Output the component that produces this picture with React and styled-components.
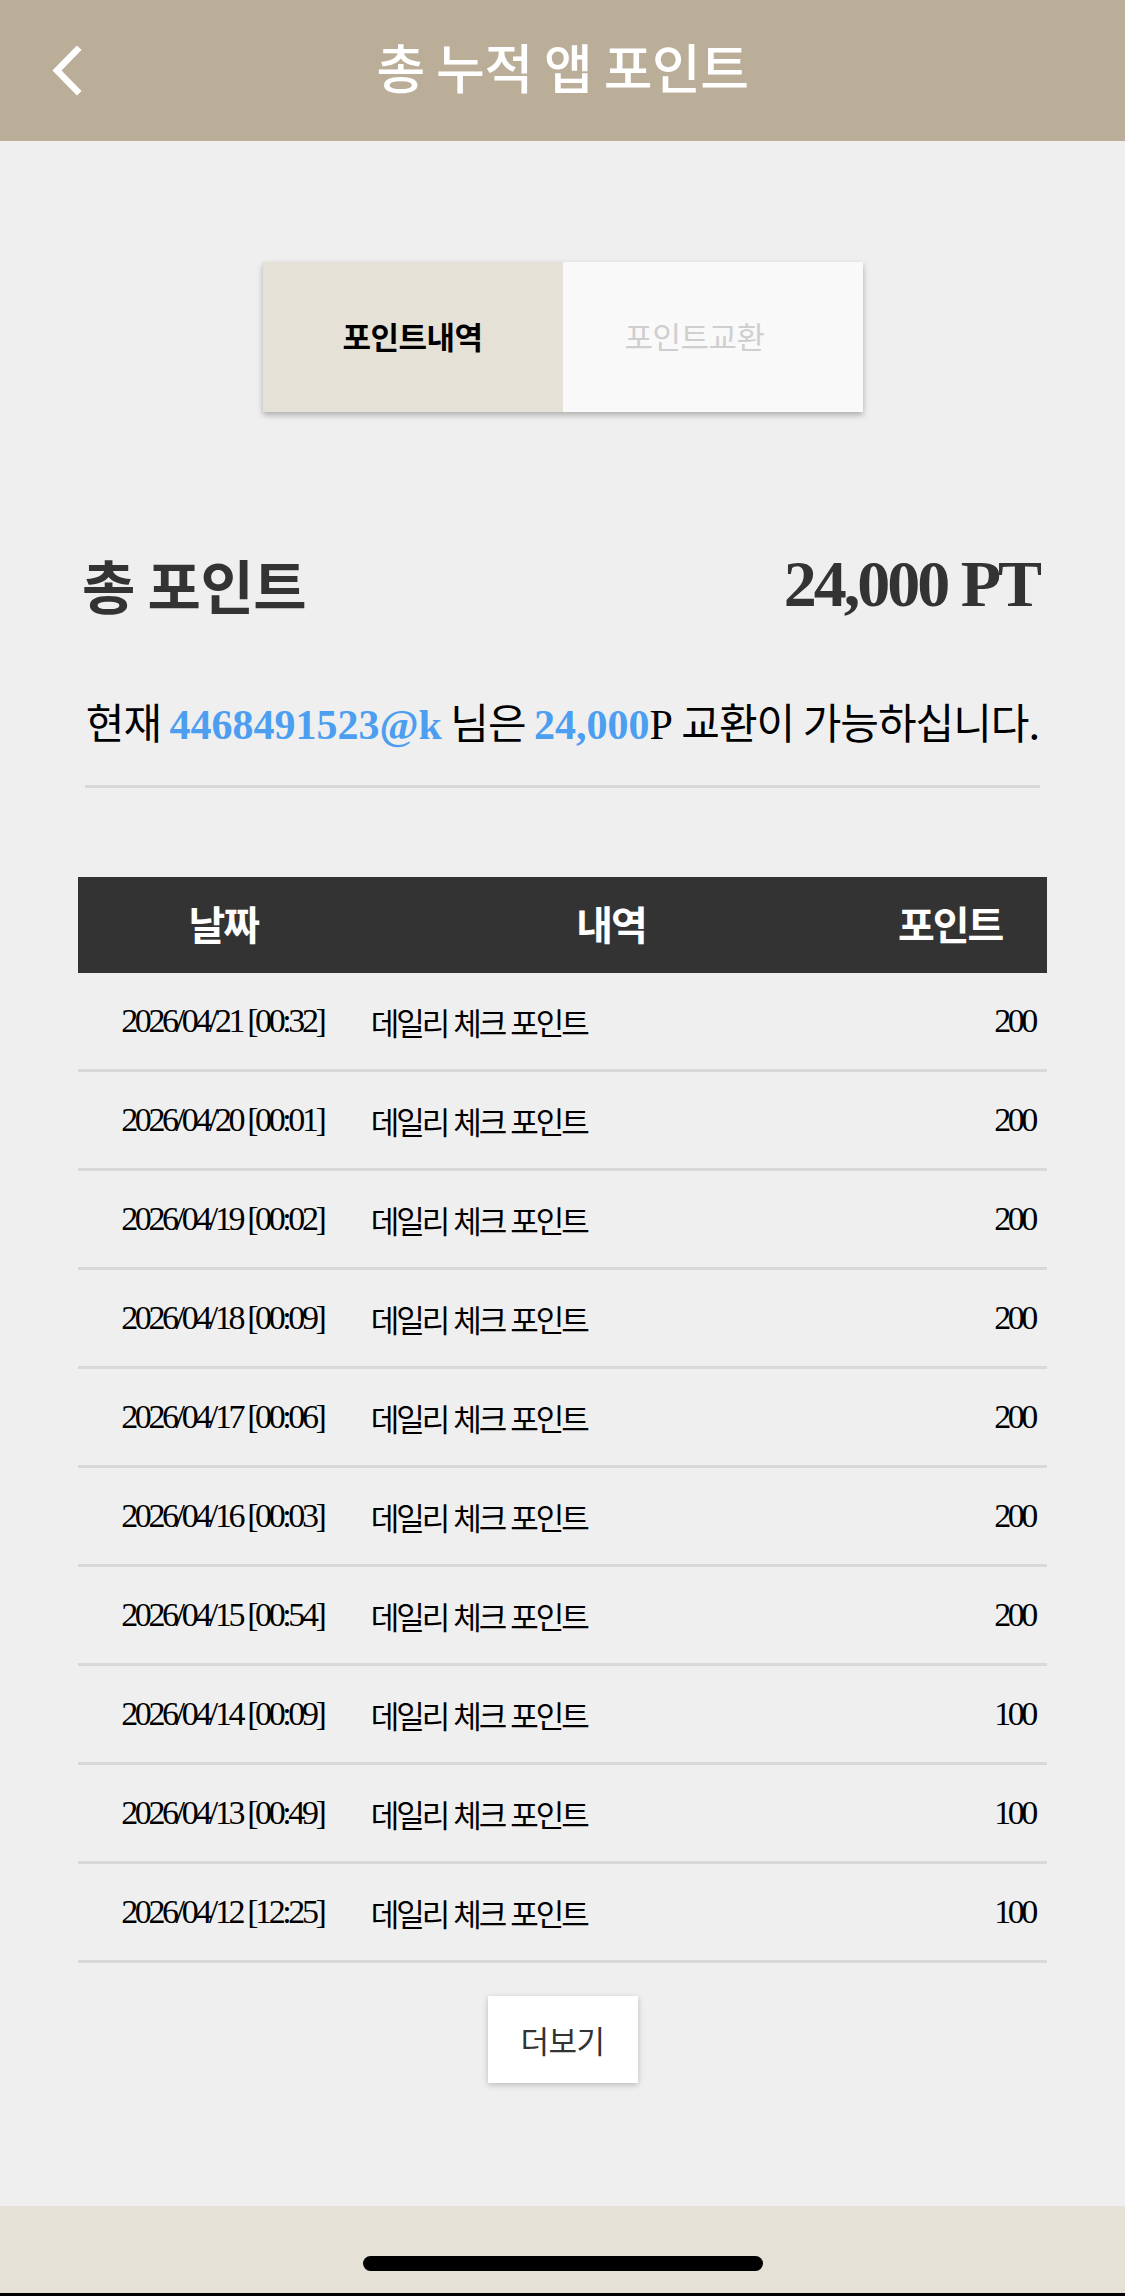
import React, { useState } from 'react'
import styled, { createGlobalStyle } from 'styled-components'

const KR = `"Noto Sans CJK KR", "Noto Sans", sans-serif`
const SERIF = `"Liberation Serif", "Noto Sans CJK KR", serif`

const GlobalStyle = createGlobalStyle`
  html, body {
    margin: 0;
    padding: 0;
    background: #efefef;
  }
  * {
    box-sizing: border-box;
  }
`

const Page = styled.div`
  min-height: 2296px;
  display: flex;
  flex-direction: column;
  font-family: ${KR};
  color: #000;
`

const Header = styled.header`
  height: 141px;
  background: #baae98;
  display: grid;
  grid-template-columns: 1fr auto 1fr;
  align-items: center;
`

const BackButton = styled.button`
  justify-self: start;
  margin-left: 50px;
  padding: 0;
  width: 40px;
  height: 50px;
  border: none;
  background: transparent;
  display: flex;
  align-items: center;
  cursor: pointer;
`

const Title = styled.h1`
  margin: 0;
  font-size: 53px;
  font-weight: 500;
  color: #fff;
  letter-spacing: -0.5px;
  line-height: 1;
  padding-bottom: 8px;
`

const Main = styled.main`
  flex: 1;
  padding: 121px 78px 0;
  display: flex;
  flex-direction: column;
`

const Tabs = styled.div`
  align-self: center;
  width: 600px;
  height: 150px;
  display: grid;
  grid-template-columns: 1fr 1fr;
  box-shadow: 0 3px 6px rgba(0, 0, 0, 0.28);
`

const Tab = styled.button`
  border: none;
  margin: 0;
  font-family: ${KR};
  font-size: 31px;
  letter-spacing: -0.5px;
  cursor: pointer;
  background: ${p => (p.$active ? '#e5e1d6' : '#f9f9f9')};
  color: ${p => (p.$active ? '#000' : '#cfcfcf')};
  font-weight: ${p => (p.$active ? 700 : 400)};
  padding: 0 ${p => (p.$active ? '0' : '36px')} 4px 0;
`

const TotalRow = styled.div`
  margin-top: 140px;
  padding: 0 8px 0 4px;
  display: flex;
  justify-content: space-between;
  align-items: center;
  color: #333;
  height: 64px;
`

const TotalLabel = styled.h2`
  margin: 0;
  font-size: 58px;
  font-weight: 700;
  letter-spacing: -0.5px;
`

const TotalValue = styled.div`
  font-family: ${SERIF};
  font-size: 66px;
  font-weight: 700;
  letter-spacing: -3px;
`

const Message = styled.p`
  margin: 79px 0 0;
  text-align: center;
  font-size: 42px;
  letter-spacing: -1px;
  line-height: 52px;
  color: #000;
`

const Blue = styled.b`
  font-family: ${SERIF};
  color: #4c9ef0;
  font-weight: 700;
  letter-spacing: 0;
`

const SerifText = styled.span`
  font-family: ${SERIF};
  letter-spacing: 0;
`

const Divider = styled.hr`
  margin: 34px 7px 0;
  border: none;
  height: 3px;
  background: #d9d9d9;
`

const Table = styled.div`
  margin-top: 89px;
  display: flex;
  flex-direction: column;
`

const Cols = styled.div`
  display: grid;
  grid-template-columns: 30% 50% 20%;
  align-items: center;
`

const HeadRow = styled(Cols)`
  height: 96px;
  background: #333;
  color: #fff;
`

const HeadCell = styled.div`
  text-align: center;
  font-size: 40px;
  font-weight: 700;
  letter-spacing: -2px;
  padding-bottom: 4px;
`

const Row = styled(Cols)`
  height: 99px;
  border-bottom: 3px solid #d9d9d9;
`

const DateCell = styled.div`
  text-align: center;
  font-family: ${SERIF};
  font-size: 34px;
  letter-spacing: -3.4px;
  padding-right: 2px;
`

const DescCell = styled.div`
  font-size: 31px;
  letter-spacing: -3px;
  word-spacing: 2px;
  padding-left: 2px;
`

const PointCell = styled.div`
  text-align: right;
  font-family: ${SERIF};
  font-size: 34px;
  letter-spacing: -3.4px;
  padding-right: 12px;
`

const MoreButton = styled.button`
  align-self: center;
  margin-top: 33px;
  width: 150px;
  height: 87px;
  border: none;
  background: #fff;
  box-shadow: 0 2px 6px rgba(0, 0, 0, 0.22);
  font-family: ${KR};
  font-size: 31px;
  letter-spacing: -0.5px;
  color: #333;
  cursor: pointer;
`

const Footer = styled.footer`
  height: 90px;
  background: #e5e1d6;
  display: flex;
  justify-content: center;
  border-bottom: 3px solid #000;
`

const HomeIndicator = styled.div`
  margin-top: 50px;
  width: 400px;
  height: 15px;
  border-radius: 8px;
  background: #000;
`

const history = [
  ['2026/04/21 [00:32]', 200],
  ['2026/04/20 [00:01]', 200],
  ['2026/04/19 [00:02]', 200],
  ['2026/04/18 [00:09]', 200],
  ['2026/04/17 [00:06]', 200],
  ['2026/04/16 [00:03]', 200],
  ['2026/04/15 [00:54]', 200],
  ['2026/04/14 [00:09]', 100],
  ['2026/04/13 [00:49]', 100],
  ['2026/04/12 [12:25]', 100],
]

export default function App() {
  const [tab, setTab] = useState('history')

  return (
    <Page>
      <GlobalStyle />
      <Header>
        <BackButton aria-label="back">
          <svg width="34" height="50" viewBox="0 0 34 50">
            <polyline points="27,4 7,24.5 27,45" fill="none" stroke="#fff" strokeWidth="6.5" strokeLinecap="square" />
          </svg>
        </BackButton>
        <Title>총 누적 앱 포인트</Title>
        <div />
      </Header>

      <Main>
        <Tabs>
          <Tab $active={tab === 'history'} onClick={() => setTab('history')}>포인트내역</Tab>
          <Tab $active={tab === 'exchange'} onClick={() => setTab('exchange')}>포인트교환</Tab>
        </Tabs>

        <TotalRow>
          <TotalLabel>총 포인트</TotalLabel>
          <TotalValue>24,000 PT</TotalValue>
        </TotalRow>

        <Message>
          현재 <Blue>4468491523@k</Blue> 님은 <Blue>24,000</Blue><SerifText>P</SerifText> 교환이 가능하십니다.
        </Message>
        <Divider />

        <Table>
          <HeadRow>
            <HeadCell>날짜</HeadCell>
            <HeadCell>내역</HeadCell>
            <HeadCell>포인트</HeadCell>
          </HeadRow>
          {history.map(([date, pt]) => (
            <Row key={date}>
              <DateCell>{date}</DateCell>
              <DescCell>데일리 체크 포인트</DescCell>
              <PointCell>{pt}</PointCell>
            </Row>
          ))}
        </Table>

        <MoreButton>더보기</MoreButton>
      </Main>

      <Footer>
        <HomeIndicator />
      </Footer>
    </Page>
  )
}
